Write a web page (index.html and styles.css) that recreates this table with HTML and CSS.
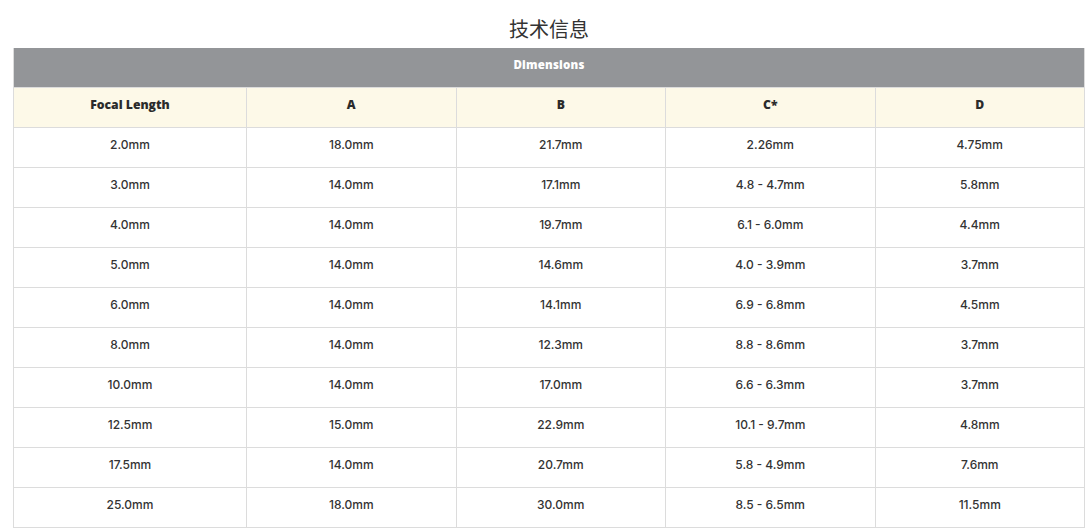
FILE: index.html
```html
<!DOCTYPE html>
<html lang="zh">
<head>
<meta charset="utf-8">
<title>技术信息</title>
<link rel="stylesheet" href="styles.css">
</head>
<body>
<div class="page">
  <h2 class="title">技术信息</h2>
  <table class="spec">
    <colgroup>
      <col class="c1"><col><col><col><col>
    </colgroup>
    <thead>
      <tr class="group"><th colspan="5">Dimensions</th></tr>
      <tr class="heads"><th>Focal Length</th><th>A</th><th>B</th><th>C*</th><th>D</th></tr>
    </thead>
    <tbody>
      <tr><td>2.0mm</td><td>18.0mm</td><td>21.7mm</td><td>2.26mm</td><td>4.75mm</td></tr>
      <tr><td>3.0mm</td><td>14.0mm</td><td>17.1mm</td><td>4.8 - 4.7mm</td><td>5.8mm</td></tr>
      <tr><td>4.0mm</td><td>14.0mm</td><td>19.7mm</td><td>6.1 - 6.0mm</td><td>4.4mm</td></tr>
      <tr><td>5.0mm</td><td>14.0mm</td><td>14.6mm</td><td>4.0 - 3.9mm</td><td>3.7mm</td></tr>
      <tr><td>6.0mm</td><td>14.0mm</td><td>14.1mm</td><td>6.9 - 6.8mm</td><td>4.5mm</td></tr>
      <tr><td>8.0mm</td><td>14.0mm</td><td>12.3mm</td><td>8.8 - 8.6mm</td><td>3.7mm</td></tr>
      <tr><td>10.0mm</td><td>14.0mm</td><td>17.0mm</td><td>6.6 - 6.3mm</td><td>3.7mm</td></tr>
      <tr><td>12.5mm</td><td>15.0mm</td><td>22.9mm</td><td>10.1 - 9.7mm</td><td>4.8mm</td></tr>
      <tr><td>17.5mm</td><td>14.0mm</td><td>20.7mm</td><td>5.8 - 4.9mm</td><td>7.6mm</td></tr>
      <tr><td>25.0mm</td><td>18.0mm</td><td>30.0mm</td><td>8.5 - 6.5mm</td><td>11.5mm</td></tr>
    </tbody>
  </table>
</div>
</body>
</html>
```
FILE: styles.css
```css
html, body {
  margin: 0;
  padding: 0;
  background: #fff;
}
.page {
  padding: 0 6px 0 13px;
  font-family: Inter, "Noto Sans", sans-serif;
  color: #333;
}
.title {
  margin: 0;
  padding-top: 15px;
  height: 48px;
  box-sizing: border-box;
  text-align: center;
  font-family: "Noto Sans CJK SC", "Noto Sans", sans-serif;
  font-weight: 400;
  font-size: 20px;
  line-height: 28px;
  color: #333;
}
.spec {
  width: 1072px;
  border-collapse: collapse;
  table-layout: fixed;
}
.spec .c1 {
  width: 233px;
}
.spec th, .spec td {
  border: 1px solid #dcdcdc;
  height: 32px;
  padding: 0 0 7px;
  text-align: center;
  vertical-align: middle;
}
.spec td {
  font-size: 12px;
  font-weight: 500;
  color: #333;
}
.group th {
  background: #939598;
  color: #fff;
  border-top: none;
  font-family: "Open Sans", Lato, sans-serif;
  font-weight: 800;
  font-size: 11.5px;
  letter-spacing: 0.2px;
}
.heads th {
  background: #fdf9e8;
  color: #2b2b2b;
  font-family: "Open Sans", Lato, sans-serif;
  font-weight: 800;
  font-size: 12.2px;
}
```
